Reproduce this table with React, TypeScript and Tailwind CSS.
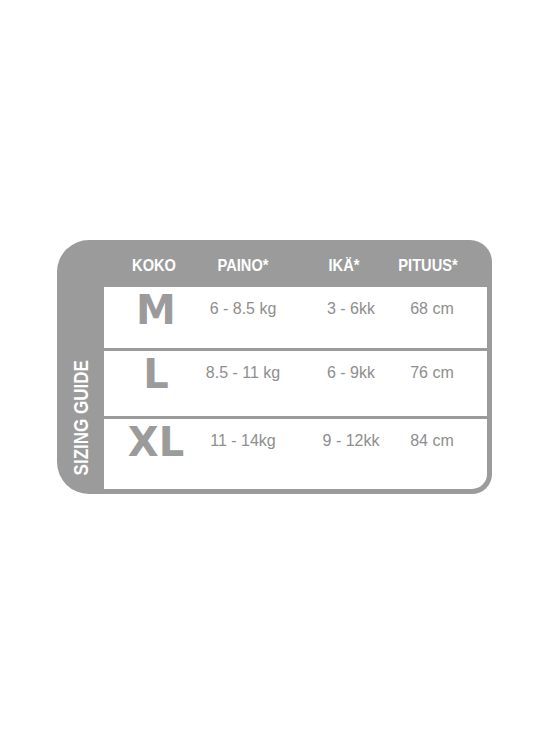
const narrow = { fontFamily: "'Liberation Sans', sans-serif" };

const rows = [
  { size: "M", weight: "6 - 8.5 kg", age: "3 - 6kk", height: "68 cm", h: "h-[64px]" },
  { size: "L", weight: "8.5 - 11 kg", age: "6 - 9kk", height: "76 cm", h: "h-[68px]" },
  { size: "XL", weight: "11 - 14kg", age: "9 - 12kk", height: "84 cm", h: "h-[70px]" },
];

const SizeRow = ({ size, weight, age, height, h }: (typeof rows)[number]) => (
  <div className={`flex items-start ${h}`}>
    <div
      className="mt-[3px] flex w-[104px] justify-center text-[40px] leading-[40px] font-bold text-[#9b9b9b]"
      style={{ fontFamily: "'DejaVu Sans', sans-serif" }}
    >
      {size}
    </div>
    <div className="mt-[12px] flex w-[70px] justify-center whitespace-nowrap text-[16px] leading-[20px] text-[#8e8e8e]">
      {weight}
    </div>
    <div className="mt-[12px] ml-[38px] flex w-[70px] justify-center whitespace-nowrap text-[16px] leading-[20px] text-[#8e8e8e]">
      {age}
    </div>
    <div className="mt-[12px] ml-[11px] flex w-[70px] justify-center whitespace-nowrap text-[16px] leading-[20px] text-[#8e8e8e]">
      {height}
    </div>
  </div>
);

export default function App() {
  return (
    <div className="min-h-[734px] w-[550px] bg-white pt-[240px] pl-[57px]" style={{ fontFamily: "'Liberation Sans', sans-serif" }}>
      <div className="flex w-[435px] flex-col overflow-hidden rounded-tl-[32px] rounded-tr-[22px] rounded-bl-[32px] rounded-br-[20px] bg-[#9b9b9b]">
        {/* header, squeezed to look condensed */}
        <div className="flex h-[47px] items-start pt-[16px] pl-[47px] text-[17px] leading-[20px] font-bold text-white" style={narrow}>
          <div className="flex w-[100px] scale-x-[0.86] justify-center">KOKO</div>
          <div className="ml-[4px] flex w-[70px] scale-x-[0.86] justify-center">PAINO*</div>
          <div className="ml-[31px] flex w-[70px] scale-x-[0.86] justify-center">IKÄ*</div>
          <div className="ml-[14px] flex w-[70px] scale-x-[0.86] justify-center">PITUUS*</div>
        </div>

        <div className="flex">
          <div className="flex w-[47px] flex-col items-center justify-end pb-[8px]">
            <span
              className="rotate-180 scale-y-[0.85] text-[20px] leading-none font-bold whitespace-nowrap text-white [writing-mode:vertical-rl]"
              style={narrow}
            >
              SIZING GUIDE
            </span>
          </div>
          <div className="mr-[5px] mb-[5px] flex flex-1 flex-col divide-y-[3px] divide-[#9b9b9b] overflow-hidden rounded-br-[15px] bg-white">
            {rows.map((r) => (
              <SizeRow key={r.size} {...r} />
            ))}
          </div>
        </div>
      </div>
    </div>
  );
}
